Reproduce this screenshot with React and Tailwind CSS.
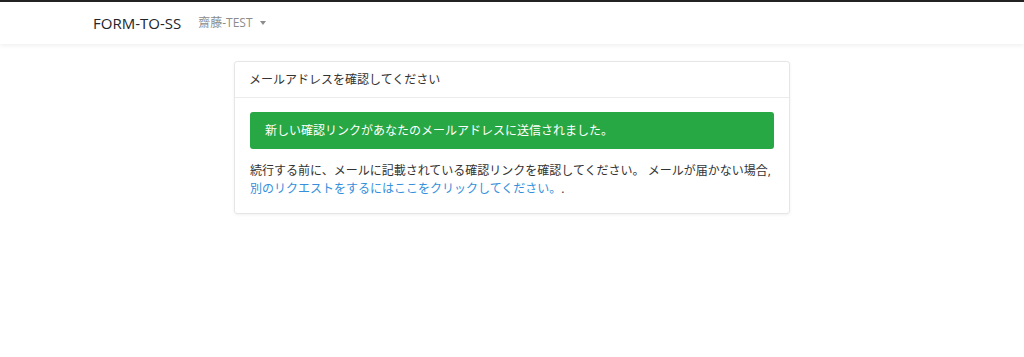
export default function App() {
  const font = { fontFamily: '"Open Sans", "Noto Sans CJK JP", sans-serif' };
  return (
    <div className="min-h-[357px] bg-white text-[#333]" style={font}>
      <nav className="border-t-2 border-[#222] bg-white shadow-[0_2px_4px_rgba(0,0,0,0.06)]">
        <div className="flex h-[42px] items-center pl-[93px]">
          <span className="text-[15px] text-[#212529]">FORM-TO-SS</span>
          <span className="ml-[17px] flex items-center text-[12px] text-[#8c8c8c]">
            齋藤-TEST
            <span className="ml-[7px] inline-block h-0 w-0 border-x-[3.5px] border-t-[4px] border-x-transparent border-t-[#8c8c8c]" />
          </span>
        </div>
      </nav>
      <main className="flex justify-center pt-[17px]">
        <div className="w-[556px] rounded-[3px] border border-[#e6e6e6] shadow-[0_1px_3px_rgba(0,0,0,0.06)]">
          <div className="flex h-[36px] items-center border-b border-[#ececec] px-[14px] text-[12px]">
            メールアドレスを確認してください
          </div>
          <div className="px-[15px] pt-[14px] pb-[15px]">
            <div className="flex h-[37px] items-center rounded-[3px] bg-[#28a745] px-[15px] text-[12px] text-white">
              新しい確認リンクがあなたのメールアドレスに送信されました。
            </div>
            <p className="mt-[13px] whitespace-nowrap text-[12px] leading-[18px]">
              続行する前に、メールに記載されている確認リンクを確認してください。 メールが届かない場合,
              <br />
              <a className="text-[#3490dc]">別のリクエストをするにはここをクリックしてください。</a>.
            </p>
          </div>
        </div>
      </main>
    </div>
  );
}
